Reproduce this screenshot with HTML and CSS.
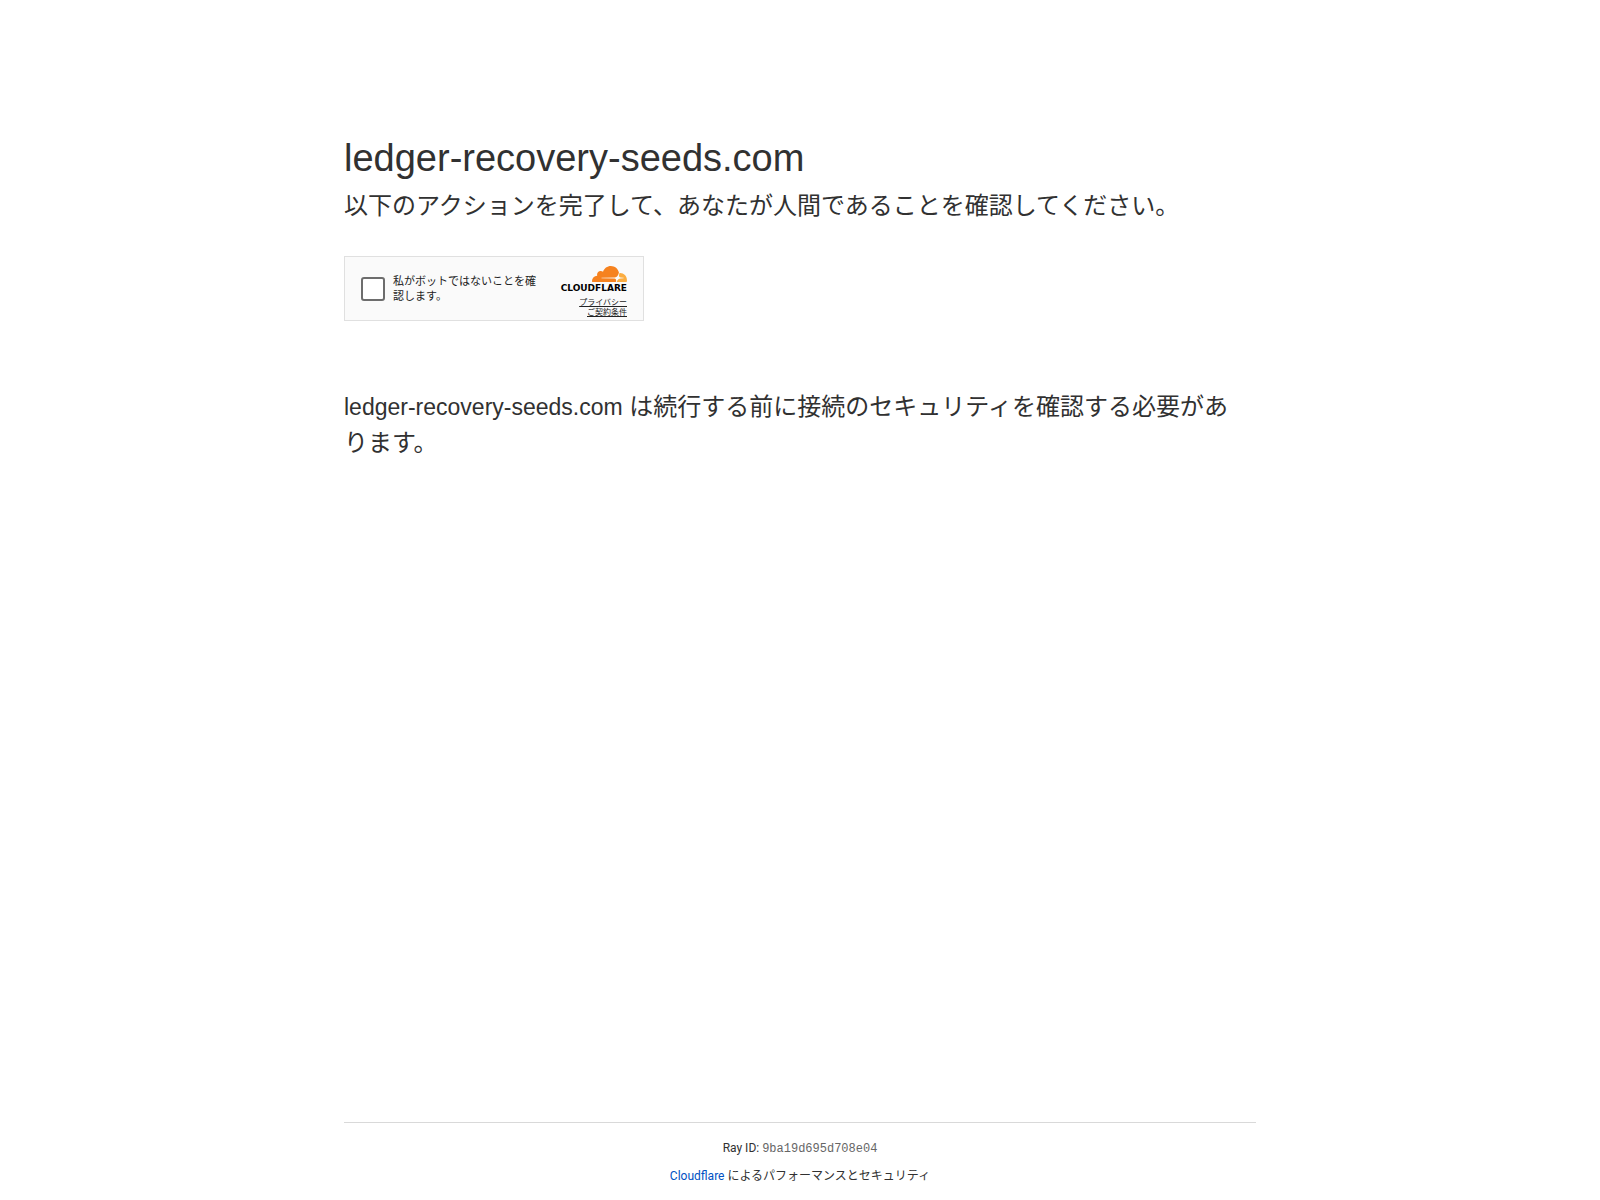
FILE: index.html
```html
<!DOCTYPE html>
<html lang="ja">
<head>
	<meta charset="UTF-8">
	<meta name="viewport" content="width=device-width, initial-scale=1">
	<title>ledger-recovery-seeds.com</title>
	<link rel="stylesheet" href="styles.css">
</head>
<body>
	<main class="main">
		<h1>ledger-recovery-seeds.com</h1>
		<h2>以下のアクションを完了して、あなたが人間であることを確認してください。</h2>
		<div class="widget">
			<input type="checkbox" id="verify">
			<label for="verify">私がボットではないことを確認します。</label>
			<div class="branding">
				<svg class="logo" viewBox="0 0 73 26" role="img" aria-label="Cloudflare">
					<path fill="#f6821f" d="M61.88 15.78L62.06 15.16C62.28 14.41 62.2 13.72 61.84 13.22C61.51 12.75 60.96 12.48 60.3 12.45L47.72 12.28C47.6 12.28 47.45 12.1 47.49 11.95C47.53 11.82 47.65 11.73 47.79 11.72L60.48 11.56C61.99 11.49 63.62 10.25 64.19 8.73L64.91 6.81C64.94 6.73 64.95 6.64 64.93 6.56C64.11 2.81 60.81 0 56.87 0C53.23 0 50.14 2.38 49.03 5.69C48.29 5.12 47.35 4.86 46.42 4.96C44.68 5.13 43.28 6.56 43.1 8.33C43.06 8.77 43.09 9.22 43.2 9.65C40.35 9.73 38.06 12.1 38.06 15.02C38.06 15.28 38.08 15.53 38.12 15.79C38.14 15.91 38.24 16.01 38.36 16.01H61.6C61.73 16.01 61.85 15.91 61.88 15.78Z"/>
					<path fill="#fbad41" d="M66.08 6.95C65.96 6.95 65.84 6.96 65.73 6.96C65.64 6.97 65.57 7.03 65.55 7.11L65.05 8.84C64.84 9.59 64.92 10.28 65.27 10.78C65.6 11.25 66.15 11.52 66.81 11.56L69.5 11.72C69.65 11.72 69.77 11.9 69.72 12.06C69.67 12.18 69.56 12.27 69.42 12.28L66.64 12.45C65.12 12.52 63.49 13.76 62.92 15.27L62.72 15.8C62.69 15.9 62.75 16.01 62.85 16.01H72.45C72.57 16.01 72.67 15.93 72.7 15.82C72.87 15.21 72.96 14.57 72.95 13.93C72.95 10.08 69.87 6.95 66.08 6.95Z"/>
					<text x="73" y="25">CLOUDFLARE</text>
				</svg>
				<a href="#">プライバシー</a>
				<a href="#">ご契約条件</a>
			</div>
		</div>
		<p class="notice"><span class="domain">ledger-recovery-seeds.com</span> は続行する前に接続のセキュリティを確認する必要があ<br>ります。</p>
	</main>
	<footer class="footer">
		<div class="footer-inner">
			<div>Ray ID: <code>9ba19d695d708e04</code></div>
			<div><a href="#">Cloudflare</a> によるパフォーマンスとセキュリティ</div>
		</div>
	</footer>
</body>
</html>
```
FILE: styles.css
```css
* { box-sizing: border-box; margin: 0; padding: 0; }
body {
	display: flex;
	flex-direction: column;
	min-height: 100vh;
	color: #313131;
	background-color: #fff;
	font-family: "Liberation Sans", "Noto Sans CJK JP", sans-serif;
}
.main {
	flex: 1;
	width: 100%;
	max-width: 960px;
	margin: 0 auto;
	padding: 128px 24px 64px;
}
h1 {
	font-size: 38px;
	font-weight: 400;
	line-height: 60px;
}
h2,
.notice {
	font-size: 24px;
	font-weight: 400;
	line-height: 36px;
}
.domain {
	font-size: 23px;
}
.widget {
	display: flex;
	align-items: center;
	width: 300px;
	height: 65px;
	margin: 32px 0 68px;
	padding: 0 16px;
	border: 1px solid #e0e0e0;
	background-color: #fafafa;
}
.widget input {
	appearance: none;
	flex: none;
	width: 24px;
	height: 24px;
	border: 2px solid #6d6d6d;
	border-radius: 3px;
	background-color: #fff;
}
.widget label {
	flex: 1;
	margin: 0 12px 0 8px;
	color: #232323;
	font-size: 11px;
	line-height: 15px;
}
.branding {
	display: flex;
	flex-direction: column;
	align-items: flex-end;
	flex: none;
	padding-top: 7px;
}
.branding a {
	color: #232323;
	font-size: 8px;
	line-height: 10px;
}
.logo {
	width: 73px;
	height: 26px;
	margin-bottom: 6px;
}
.logo text {
	fill: #000;
	font-family: "DejaVu Sans", sans-serif;
	font-size: 9px;
	font-weight: 700;
	text-anchor: end;
}
.footer {
	width: 100%;
	max-width: 960px;
	margin: 0 auto;
	padding: 0 24px;
	font-family: Roboto, "Noto Sans CJK JP", sans-serif;
	font-size: 12px;
	line-height: 18px;
	text-align: center;
}
.footer-inner {
	display: grid;
	gap: 9px;
	padding: 16px 0 15px;
	border-top: 1px solid #d9d9d9;
}
.footer code {
	color: #666;
	font-family: "Liberation Mono", monospace;
	font-size: 12px;
}
.footer a {
	color: #0051c3;
	text-decoration: none;
}
```
